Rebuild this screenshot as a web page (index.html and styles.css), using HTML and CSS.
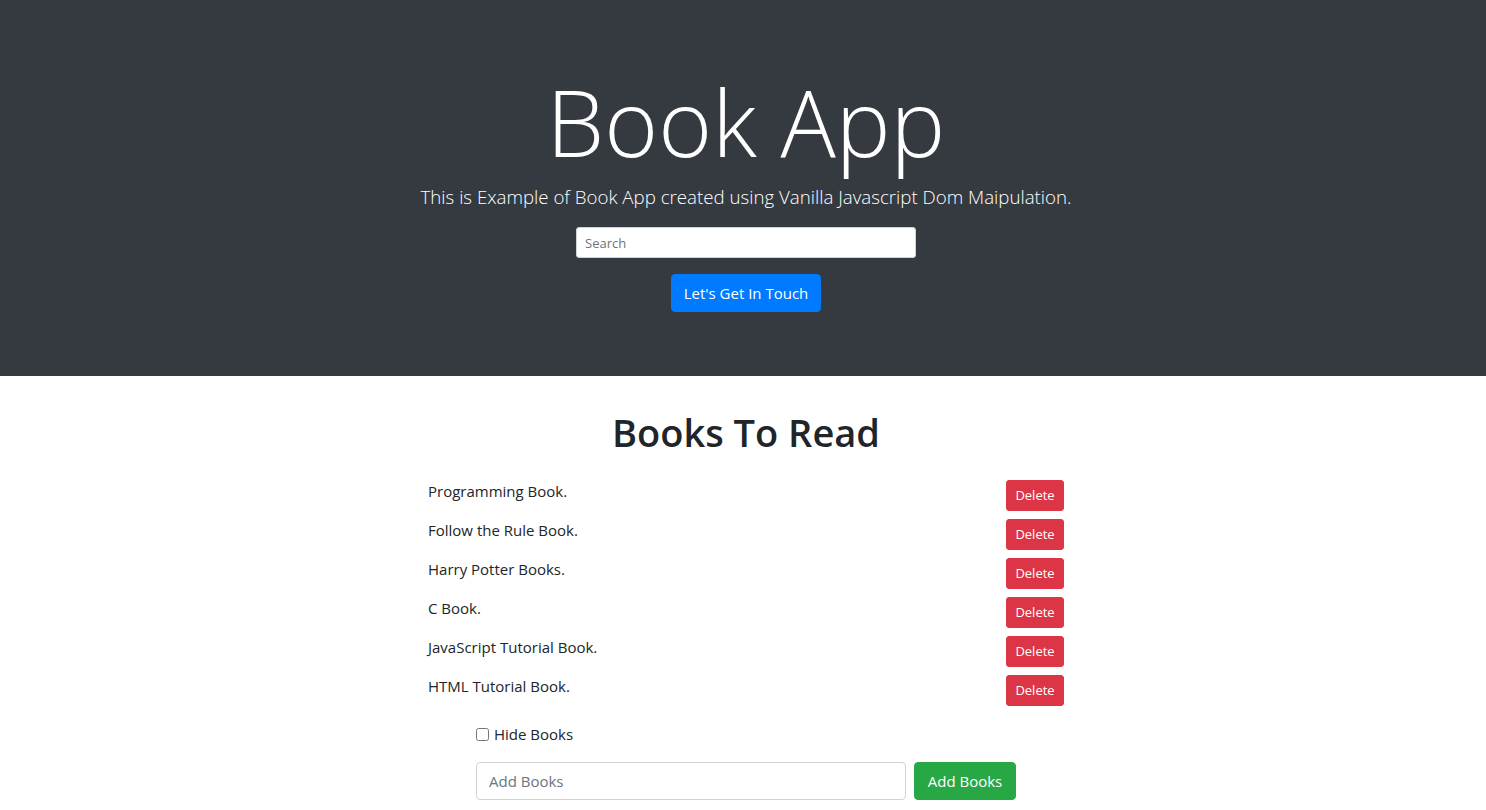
FILE: index.html
```html
<!DOCTYPE html>
<html lang="en">
<head>
<meta charset="utf-8">
<title>Book App</title>
<link rel="stylesheet" href="styles.css">
</head>
<body>
<header class="hero">
  <h1 class="hero-title">Book App</h1>
  <p class="hero-lead">This is Example of Book App created using Vanilla Javascript Dom Maipulation.</p>
  <input class="search" type="text" placeholder="Search">
  <button class="btn btn-primary">Let's Get In Touch</button>
</header>
<main class="content">
  <h2 class="section-title">Books To Read</h2>
  <ul class="book-list">
    <li class="book"><span>Programming Book.</span><button class="btn btn-sm btn-danger">Delete</button></li>
    <li class="book"><span>Follow the Rule Book.</span><button class="btn btn-sm btn-danger">Delete</button></li>
    <li class="book"><span>Harry Potter Books.</span><button class="btn btn-sm btn-danger">Delete</button></li>
    <li class="book"><span>C Book.</span><button class="btn btn-sm btn-danger">Delete</button></li>
    <li class="book"><span>JavaScript Tutorial Book.</span><button class="btn btn-sm btn-danger">Delete</button></li>
    <li class="book"><span>HTML Tutorial Book.</span><button class="btn btn-sm btn-danger">Delete</button></li>
  </ul>
  <form class="add-form">
    <label class="hide-label"><input type="checkbox" class="hide-check"> Hide Books</label>
    <div class="add-row">
      <input class="add-input" type="text" placeholder="Add Books">
      <button type="button" class="btn btn-success">Add Books</button>
    </div>
  </form>
</main>
</body>
</html>
```
FILE: styles.css
```css
* { box-sizing: border-box; }
html, body { margin: 0; padding: 0; }
body {
  font-family: "Open Sans", "Noto Sans", sans-serif;
  font-size: 16px;
  line-height: 1.5;
  color: #212529;
  background: #fff;
}
.hero {
  background: #343a40;
  color: #fff;
  padding: 64px 32px 64px 38px;
  display: flex;
  flex-direction: column;
  align-items: center;
}
.hero-title {
  margin: 0;
  font-size: 92px;
  font-weight: 300;
  line-height: 115px;
}
.hero-lead {
  margin: 3px 0 15px;
  font-size: 18.7px;
  font-weight: 300;
  line-height: 30px;
}
.search {
  width: 340px;
  height: 31px;
  padding: 4px 8px;
  font-family: inherit;
  font-size: 13px;
  border: 1px solid #ced4da;
  border-radius: 3px;
  background: #fff;
  color: #495057;
}
.search::placeholder, .add-input::placeholder { color: #6c757d; }
.btn {
  font-family: inherit;
  border: 1px solid transparent;
  color: #fff;
  border-radius: 4px;
  font-size: 15px;
  line-height: 24px;
  padding: 6px 12px;
  cursor: pointer;
}
.btn-primary { background: #007bff; border-color: #007bff; margin-top: 16px; width: 150px; height: 38px; padding: 0; }
.btn-success { background: #28a745; border-color: #28a745; width: 102px; height: 38px; padding: 0; }
.btn-sm {
  font-size: 13px;
  line-height: 21px;
  padding: 4px 0;
  width: 58px;
  height: 31px;
  border-radius: 3px;
}
.btn-danger { background: #dc3545; border-color: #dc3545; }
.content {
  display: flex;
  flex-direction: column;
  align-items: center;
  padding-left: 6px;
}
.section-title {
  margin: 32px 0 24px;
  font-size: 38px;
  font-weight: 600;
  line-height: 48px;
}
.book-list {
  list-style: none;
  margin: 0;
  padding: 0;
  width: 636px;
  display: flex;
  flex-direction: column;
  gap: 8px;
}
.book {
  display: flex;
  justify-content: space-between;
  align-items: flex-start;
  font-size: 15px;
  height: 31px;
}
.add-form {
  width: 540px;
  margin-top: 16px;
}
.hide-label {
  display: flex;
  align-items: center;
  gap: 5px;
  font-size: 15px;
  line-height: 24px;
}
.hide-check { margin: 0; width: 13px; height: 13px; }
.add-row {
  display: flex;
  gap: 8px;
  margin-top: 16px;
}
.add-input {
  width: 430px;
  height: 38px;
  padding: 6px 12px;
  font-family: inherit;
  font-size: 15px;
  border: 1px solid #ced4da;
  border-radius: 4px;
}
```
